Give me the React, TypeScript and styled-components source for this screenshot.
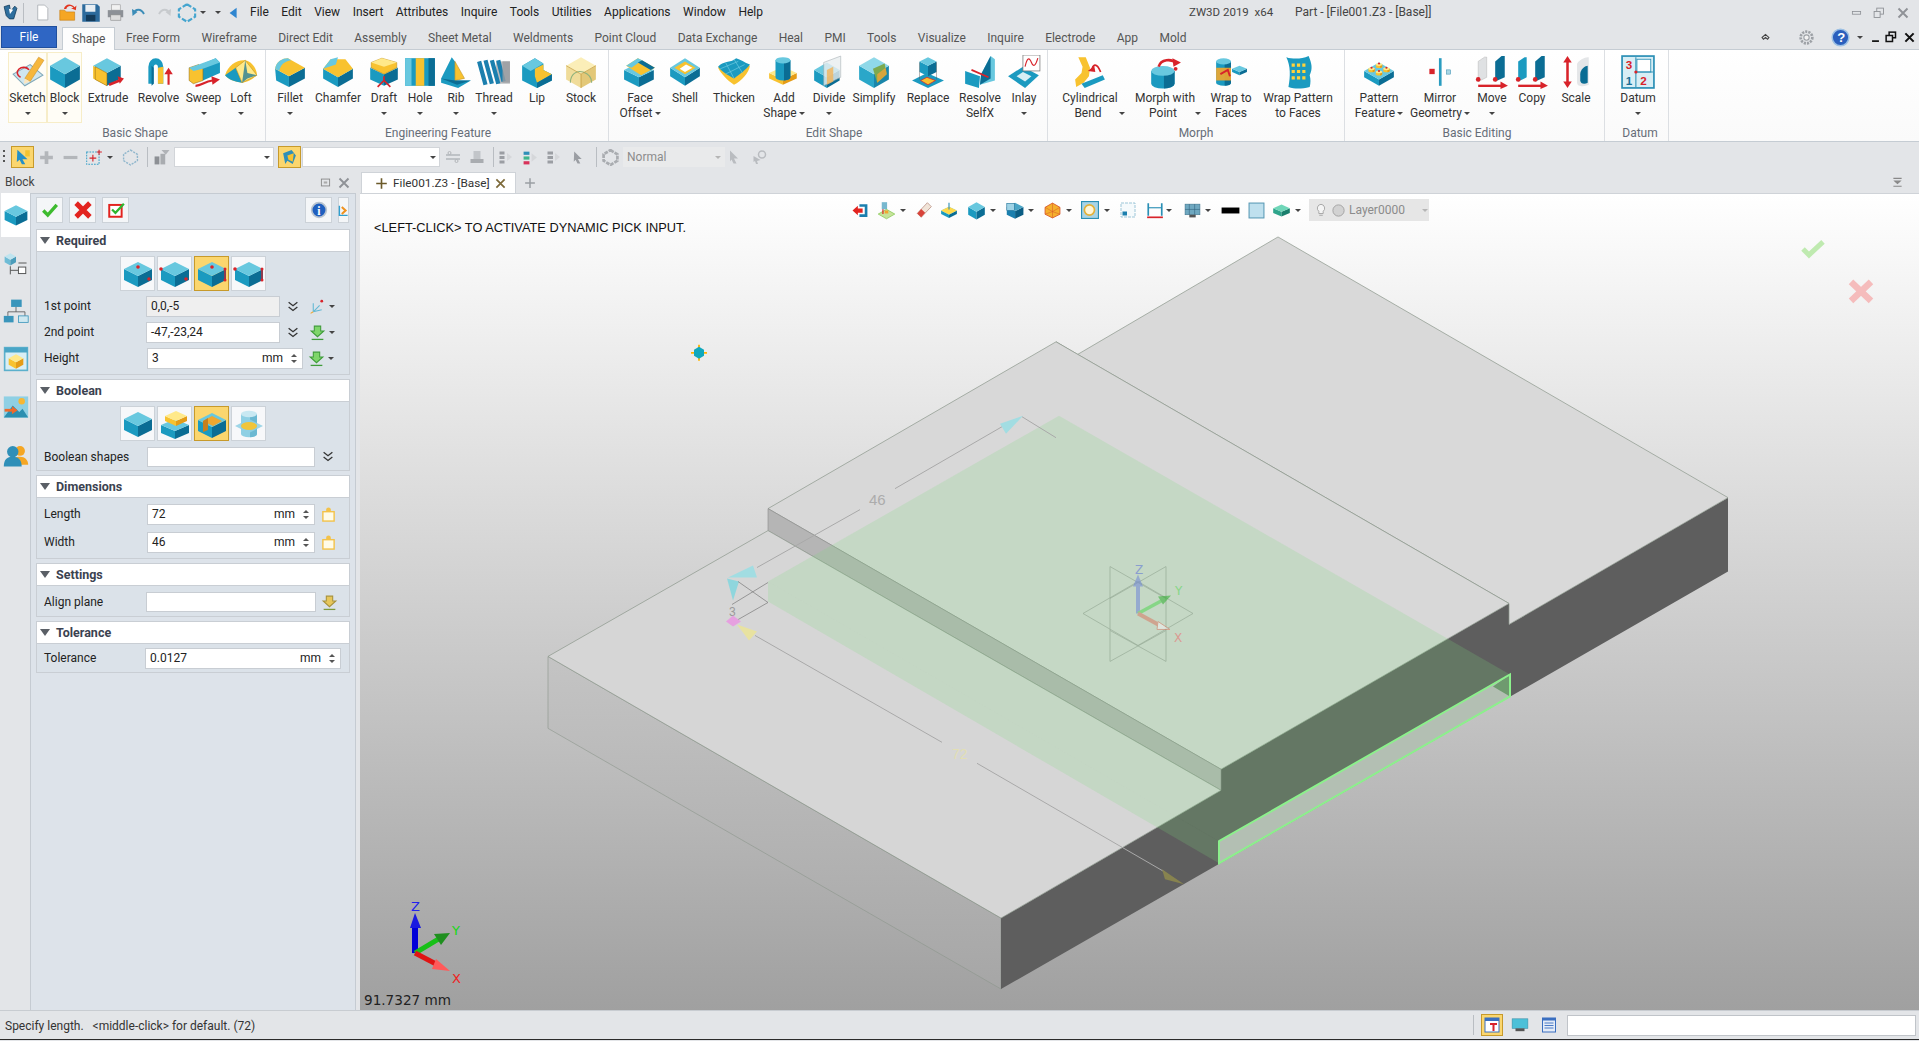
import React from "react";
import styled, { createGlobalStyle } from "styled-components";

const GlobalStyle = createGlobalStyle`
  html, body { margin: 0; padding: 0; overflow: hidden; background: #e3e5e8; }
  * { box-sizing: border-box; }
`;

const UI = `Roboto, "Liberation Sans", sans-serif`;

const Root = styled.div`
  width: 1919px;
  height: 1041px;
  display: flex;
  flex-direction: column;
  background: #e3e5e8;
  color: #333;
  font: 12px/15px ${UI};
  overflow: hidden;
`;

const TopRow = styled.div`
  height: 25px;
  flex: none;
  display: flex;
  align-items: center;
`;

const Slot = styled.div<{ $w: number; $ml?: number }>`
  width: ${(p) => p.$w}px;
  margin-left: ${(p) => p.$ml || 0}px;
  flex: none;
  display: flex;
  align-items: center;
  justify-content: center;
`;

const VSep = styled.div<{ $ml?: number }>`
  width: 1px;
  height: 20px;
  margin-left: ${(p) => p.$ml || 0}px;
  flex: none;
  background: #b9bdc2;
`;

const Menu = styled.nav`
  width: 939px;
  margin-left: 9px;
  flex: none;
  display: flex;
  gap: 12.5px;
  color: #222;
`;

const TitleA = styled.div`
  width: 106px;
  flex: none;
  color: #444;
  font-size: 11.5px;
`;

const TitleB = styled.div`
  width: 550px;
  flex: none;
  color: #444;
`;

const TabRow = styled.div`
  height: 24px;
  flex: none;
  display: flex;
  align-items: flex-end;
  position: relative;
  z-index: 1;
`;

const FileTab = styled.div`
  width: 56px;
  height: 22px;
  margin-left: 1px;
  margin-bottom: 1px;
  background: #2f66c4;
  border: 1px solid #1f4f9e;
  color: #fff;
  display: flex;
  align-items: center;
  justify-content: center;
`;

const Tab = styled.div<{ $on?: boolean }>`
  height: ${(p) => (p.$on ? 23 : 22)}px;
  padding: 0 10.7px;
  display: flex;
  align-items: center;
  color: #555;
  ${(p) =>
    p.$on &&
    `
    margin: 0 0 -1px 5px;
    padding: 0 9px;
    background: #fdfdfd;
    border: 1px solid #c5ccd3;
    border-bottom: none;
  `}
`;

const TabIcons = styled.div`
  position: absolute;
  right: 0;
  top: 0;
  height: 24px;
  display: flex;
  align-items: center;
`;

const Ribbon = styled.div`
  height: 93px;
  flex: none;
  display: flex;
  background: linear-gradient(#ffffff, #fafafa);
  border-top: 1px solid #c5ccd3;
  border-bottom: 1px solid #c5ccd3;
`;

const Group = styled.div<{ $pl: number; $pr: number }>`
  flex: none;
  padding: 2px ${(p) => p.$pr}px 0 ${(p) => p.$pl}px;
  border-right: 1px solid #dcdfe3;
  display: flex;
  flex-direction: column;
`;

const GroupItems = styled.div`
  display: flex;
  height: 71px;
`;

const GroupName = styled.div`
  margin-top: 2px;
  padding-left: 4px;
  height: 16px;
  line-height: 16px;
  text-align: center;
  color: #666d78;
`;

const RItem = styled.div<{ $w: number; $hl?: boolean }>`
  width: ${(p) => p.$w}px;
  flex: none;
  padding-top: 2px;
  display: flex;
  flex-direction: column;
  align-items: center;
  border: 1px solid ${(p) => (p.$hl ? "#f7edc8" : "transparent")};
  background: ${(p) => (p.$hl ? "#fffdf6" : "transparent")};
`;

const RIconWrap = styled.div`
  margin-bottom: 2px;
`;

const RLabel = styled.div<{ $pl?: number }>`
  height: 15px;
  padding-left: ${(p) => p.$pl || 0}px;
  display: flex;
  align-items: center;
  justify-content: center;
  white-space: nowrap;
  color: #333;
`;

const Caret = styled.span<{ $ml?: number; $light?: boolean }>`
  display: inline-block;
  flex: none;
  width: 0;
  height: 0;
  margin-left: ${(p) => p.$ml || 0}px;
  border-left: 3px solid transparent;
  border-right: 3px solid transparent;
  border-top: 3px solid ${(p) => (p.$light ? "#b5b5b5" : "#444")};
`;

const Toolbar = styled.div`
  height: 30px;
  flex: none;
  display: flex;
  align-items: center;
`;

const Grip = styled.div`
  width: 2px;
  height: 14px;
  margin-left: 3px;
  flex: none;
  background: repeating-linear-gradient(#555 0 2px, transparent 2px 5px);
`;

const Hi = styled.div<{ $w: number; $ml?: number }>`
  width: ${(p) => p.$w}px;
  height: 22px;
  margin-left: ${(p) => p.$ml || 0}px;
  flex: none;
  display: flex;
  align-items: center;
  justify-content: center;
  background: #fbd66e;
  border: 1px solid #c79a2b;
`;

const Combo = styled.div<{ $w: number; $ml?: number; $off?: boolean }>`
  width: ${(p) => p.$w}px;
  height: 20px;
  margin-left: ${(p) => p.$ml || 0}px;
  flex: none;
  padding: 0 3px 0 3px;
  display: flex;
  align-items: center;
  justify-content: space-between;
  background: ${(p) => (p.$off ? "#e9eaeb" : "#fff")};
  color: #8c8c8c;
  border: 1px solid ${(p) => (p.$off ? "#e9eaeb" : "#d2d5d9")};
`;

const Work = styled.div`
  height: 838px;
  flex: none;
  display: flex;
`;

const Dock = styled.aside`
  width: 360px;
  flex: none;
  display: flex;
  flex-direction: column;
`;

const DockTitle = styled.div`
  height: 21px;
  flex: none;
  padding: 0 8px 0 5px;
  display: flex;
  align-items: center;
  justify-content: space-between;
  color: #444;
`;

const DockBody = styled.div`
  flex: 1;
  display: flex;
`;

const Rail = styled.div`
  width: 30px;
  flex: none;
  display: flex;
  flex-direction: column;
  gap: 4px;
  padding-left: 1px;
`;

const RailTab = styled.div<{ $on?: boolean }>`
  height: 44px;
  display: flex;
  align-items: center;
  justify-content: center;
  background: ${(p) => (p.$on ? "#fff" : "transparent")};
`;

const Panel = styled.div`
  width: 326px;
  flex: none;
  padding: 3px 6px 0 5px;
  background: #dde3ea;
  border: 1px solid #c5cbd2;
  border-bottom: none;
  display: flex;
  flex-direction: column;
`;

const PanelTop = styled.div`
  height: 26px;
  flex: none;
  display: flex;
  gap: 6px;
  margin-bottom: 6px;
`;

const PanelBtn = styled.div<{ $ml?: number; $w?: number }>`
  width: ${(p) => p.$w || 28}px;
  margin-left: ${(p) => p.$ml || 0}px;
  display: flex;
  align-items: center;
  justify-content: center;
  background: #f4f6f8;
  border: 1px solid #ccd2d8;
`;

const Section = styled.section`
  margin: 0 0 4px 0;
  width: 314px;
  flex: none;
  border: 1px solid #c9ced4;
  border-top: none;
`;

const SectionHead = styled.div`
  height: 23px;
  padding-left: 3px;
  display: flex;
  align-items: center;
  gap: 6px;
  background: #fff;
  border-top: 1px solid #c9ced4;
  border-bottom: 1px solid #c9ced4;
  font-weight: 700;
  font-size: 12.5px;
  color: #3b4250;
`;

const HeadArrow = styled.span`
  width: 0;
  height: 0;
  border-left: 5px solid transparent;
  border-right: 5px solid transparent;
  border-top: 7px solid #5a5f66;
`;

const SectionBody = styled.div<{ $pt: number; $pb: number; $gap: number }>`
  padding: ${(p) => p.$pt}px 0 ${(p) => p.$pb}px 7px;
  display: flex;
  flex-direction: column;
  gap: ${(p) => p.$gap}px;
  background: #dbe2e9;
`;

const ShapeRow = styled.div`
  margin-left: 76px;
  display: flex;
  gap: 2px;
`;

const ShapeBtn = styled.div<{ $on?: boolean }>`
  width: 35px;
  height: 35px;
  display: flex;
  align-items: center;
  justify-content: center;
  background: ${(p) => (p.$on ? "#fbd66e" : "#f7f8fa")};
  border: 1px solid ${(p) => (p.$on ? "#c79a2b" : "#ccd2d8")};
`;

const Row = styled.div<{ $h?: number }>`
  height: ${(p) => p.$h || 21}px;
  display: flex;
  align-items: center;
`;

const RowLabel = styled.div`
  width: 102px;
  flex: none;
  color: #222;
`;

const Field = styled.div<{ $w: number; $off?: boolean; $ml?: number }>`
  width: ${(p) => p.$w}px;
  height: 100%;
  flex: none;
  margin-left: ${(p) => p.$ml || 0}px;
  padding: 0 4px;
  display: flex;
  align-items: center;
  background: ${(p) => (p.$off ? "#efefef" : "#fff")};
  border: 1px solid #c8cdd3;
  color: #222;
`;

const Unit = styled.span`
  margin-left: auto;
  margin-right: 8px;
`;

const Spin = styled.span`
  display: flex;
  flex-direction: column;
  gap: 3px;
  margin-right: 1px;
`;

const SpinTip = styled.span<{ $down?: boolean }>`
  width: 0;
  height: 0;
  border-left: 3px solid transparent;
  border-right: 3px solid transparent;
  ${(p) => (p.$down ? "border-top: 3px solid #555;" : "border-bottom: 3px solid #555;")}
`;

const Main = styled.main`
  flex: 1;
  min-width: 0;
  display: flex;
  flex-direction: column;
`;

const DocRow = styled.div`
  height: 21px;
  flex: none;
  display: flex;
  align-items: stretch;
  padding-left: 1px;
`;

const DocTab = styled.div`
  width: 155px;
  flex: none;
  padding-left: 13px;
  display: flex;
  align-items: center;
  gap: 5px;
  background: #fff;
  border: 1px solid #cfd3d8;
  border-bottom: none;
  color: #333;
  font-size: 11.8px;
`;

const Viewport = styled.div`
  flex: 1;
  position: relative;
  overflow: hidden;
  background: linear-gradient(#ffffff, #a0a0a0);
  border-top: 1px solid #cfd3d8;
`;

const Canvas = styled.svg`
  position: absolute;
  inset: 0;
  width: 100%;
  height: 100%;
`;

const Hint = styled.div`
  position: absolute;
  left: 14px;
  top: 26px;
  font: 12.8px/15px "Liberation Sans", Arial, sans-serif;
  color: #111;
`;

const Readout = styled.div`
  position: absolute;
  left: 4px;
  bottom: 1px;
  font: 13.6px/18px "DejaVu Sans", sans-serif;
  color: #222;
`;

const ViewBar = styled.div`
  position: absolute;
  left: 492px;
  top: 5px;
  height: 22px;
  display: flex;
  align-items: center;
`;

const LayerBox = styled.div`
  width: 120px;
  height: 22px;
  margin-left: 7px;
  flex: none;
  padding: 0 7px 0 5px;
  display: flex;
  align-items: center;
  gap: 3px;
  background: #e6e6e6;
  color: #8b8b8b;
`;

const Status = styled.footer`
  height: 30px;
  flex: none;
  display: flex;
  align-items: center;
  padding-left: 5px;
  border-top: 1px solid #c8ccd1;
  border-bottom: 1px solid #2a2a2a;
  color: #333;
`;

const StatusText = styled.div`
  width: 1468px;
  flex: none;
  padding-top: 3px;
  white-space: pre;
`;

const StatusHi = styled(Hi)`
  height: 22px;
`;

const StatusInput = styled.div`
  width: 349px;
  height: 21px;
  margin-left: 10px;
  flex: none;
  background: #fff;
  border: 1px solid #c0c4c9;
`;

const IconSvg = styled.svg`
  display: block;
  flex: none;
`;

type Tone = { t: string; l: string; r: string };
const teal: Tone = { t: "#68c8df", l: "#1b9ac0", r: "#0b6d94" };
const yel: Tone = { t: "#ffe98a", l: "#f8c22f", r: "#e59c16" };
const pale: Tone = { t: "#fbeeb8", l: "#f0dc9a", r: "#e3c878" };

function Ico({ s = 32, children }: { s?: number; children: React.ReactNode }) {
  return (
    <IconSvg width={s} height={s} viewBox="0 0 32 32">
      {children}
    </IconSvg>
  );
}

function Box({ x, y, w, h, d, c = teal }: { x: number; y: number; w: number; h: number; d: number; c?: Tone }) {
  return (
    <g>
      <polygon points={`${x - w},${y} ${x},${y + h} ${x},${y + h + d} ${x - w},${y + d}`} fill={c.l} />
      <polygon points={`${x + w},${y} ${x},${y + h} ${x},${y + h + d} ${x + w},${y + d}`} fill={c.r} />
      <polygon points={`${x - w},${y} ${x},${y - h} ${x + w},${y} ${x},${y + h}`} fill={c.t} />
    </g>
  );
}

function Cyl({ x, y, r, h, c = teal }: { x: number; y: number; r: number; h: number; c?: Tone }) {
  return (
    <g>
      <path d={`M${x - r} ${y} v${h} a${r} ${r / 2.4} 0 0 0 ${2 * r} 0 v${-h}z`} fill={c.l} />
      <path d={`M${x + 1} ${y} v${h + r / 2.4} a${r} ${r / 2.4} 0 0 0 ${r - 1} ${-r / 2.4} v${-h}z`} fill={c.r} />
      <ellipse cx={x} cy={y} rx={r} ry={r / 2.4} fill={c.t} />
    </g>
  );
}

function Arrow({ d, w = 2 }: { d: string; w?: number }) {
  return <path d={d} fill="none" stroke="#d8232a" strokeWidth={w} />;
}

function Dot({ x, y, r = 1.8 }: { x: number; y: number; r?: number }) {
  return <circle cx={x} cy={y} r={r} fill="#d8232a" />;
}

const ribbonIcons: Record<string, React.ReactNode> = {
  sketch: (
    <>
      <polygon points="2,18 18,9 30,19 13,29" fill="#cfe6ef" stroke="#7fa8b8" />
      <path d="M9 21a6 5 0 1 1 8-7" fill="none" stroke="#d8232a" strokeWidth="1.5" />
      <polygon points="13,22 26,2 31,5 18,25" fill="#f6b73c" stroke="#c98a1e" strokeWidth=".5" />
      <polygon points="13,22 18,25 12,27" fill="#fbe6c0" />
    </>
  ),
  block: <Box x={16} y={10} w={14} h={8} d={13} />,
  extrude: (
    <>
      <Box x={15} y={10} w={13} h={7} d={12} c={{ t: teal.t, l: yel.l, r: teal.r }} />
      <polygon points="4,11 15,17 15,29 4,23" fill={yel.l} stroke="#8f6a12" strokeWidth=".5" />
      <Arrow d="M17 28l10-4" w={2.4} />
      <polygon points="25,20 31,22 27,27" fill="#d8232a" />
    </>
  ),
  revolve: (
    <>
      <path d="M6 27V11a7 8 0 0 1 14 0v16h-5V12a2 3 0 0 0-4 0v15z" fill={teal.l} />
      <path d="M15 12l5-1v16h-5z" fill={yel.l} />
      <path d="M11 27V12l-2-2v19z" fill={teal.r} />
      <Arrow d="M25 28V16" w={2} />
      <polygon points="21,18 25,12 29,18" fill="#d8232a" />
    </>
  ),
  sweep: (
    <>
      <polygon points="11,10 27,3 31,7 31,17 15,24" fill={teal.l} />
      <polygon points="2,12 11,9 15,13 15,24 6,27 2,24" fill={yel.l} stroke="#8f6a12" strokeWidth=".5" />
      <polygon points="2,12 11,9 27,3 31,7 15,13 6,15" fill={teal.t} />
      <Arrow d="M8 29c6 0 8-4 16-5" w={2} />
      <polygon points="23,20 31,23 24,28" fill="#d8232a" />
    </>
  ),
  loft: (
    <>
      <path d="M1 19C4 9 13 4 20 5c6 1 11 8 11 14-4 4-10 7-14 7C10 25 4 23 1 19z" fill={yel.l} />
      <path d="M1 19l10-7 6 14C10 25 4 23 1 19z" fill={teal.l} />
      <path d="M11 12l9-7 11 14-14 7z" fill={yel.t} stroke="#b88a1a" strokeWidth=".5" />
      <path d="M20 5l2 12 9 2-9 3-5 4" fill={teal.r} opacity=".7" />
    </>
  ),
  fillet: (
    <>
      <path d="M2 13l13 7v10L3 24z" fill={teal.l} />
      <path d="M15 20l15-8v10L15 30z" fill={teal.r} />
      <path d="M2 13C3 6 9 3 14 3l16 9-15 8z" fill={yel.l} />
      <path d="M2 13C3 6 9 3 14 3l3 2C11 6 7 9 6 15z" fill={teal.t} />
    </>
  ),
  chamfer: (
    <>
      <Box x={16} y={13} w={14} h={8} d={9} />
      <polygon points="2,13 9,4 23,4 30,13 16,21" fill={yel.l} />
      <polygon points="2,13 9,4 16,2 14,9" fill={teal.t} />
    </>
  ),
  draft: (
    <>
      <Box x={16} y={12} w={13} h={6} d={11} />
      <polygon points="4,7 14,3 28,7 28,12 16,18 4,12" fill={yel.l} stroke="#b88a1a" strokeWidth=".5" />
      <polygon points="4,7 14,3 28,7 16,11" fill={yel.t} />
      <Arrow d="M16 24v-4M16 24l-6 6M16 24l6 6" w={1.6} />
    </>
  ),
  hole: (
    <>
      <rect x="2" y="3" width="28" height="26" fill={teal.l} />
      <rect x="2" y="3" width="6" height="26" fill={teal.t} />
      <rect x="24" y="3" width="6" height="26" fill={teal.r} />
      <rect x="12" y="3" width="8" height="26" fill={yel.l} />
    </>
  ),
  rib: (
    <>
      <polygon points="2,22 12,2 15,6 15,24 30,24 18,31 2,26" fill={teal.l} />
      <polygon points="15,6 24,22 15,24" fill={yel.l} stroke="#b88a1a" strokeWidth=".5" />
      <polygon points="2,22 15,24 30,24 17,28" fill={teal.r} />
    </>
  ),
  thread: (
    <>
      <rect x="18" y="6" width="13" height="21" fill="#b8babd" />
      <path d="M2 6l6 22M8 5l6 22M14 5l6 22M20 5l5 20" stroke="#1b7fae" strokeWidth="4" fill="none" />
      <rect x="24" y="6" width="7" height="20" fill="#9a9ca0" opacity=".8" />
    </>
  ),
  lip: (
    <>
      <polygon points="2,10 14,3 22,8 22,14 30,18 30,24 16,31 2,24" fill={teal.l} />
      <polygon points="14,13 22,9 22,14 30,18 16,26 14,20" fill={yel.l} />
      <polygon points="2,10 14,3 22,8 10,15" fill={teal.t} />
      <polygon points="16,26 30,18 30,24 16,31" fill={teal.r} />
    </>
  ),
  stock: (
    <>
      <Box x={16} y={10} w={14} h={8} d={13} c={pale} />
      <path d="M6 26C6 18 12 14 18 16s8 6 8 10" fill="none" stroke="#8fb27d" strokeWidth="1" />
      <path d="M2 10l14 8 14-8M16 18v13" fill="none" stroke="#c39a3a" strokeWidth=".7" />
    </>
  ),
  face: (
    <>
      <Box x={15} y={14} w={14} h={7} d={9} />
      <polygon points="3,10 14,3 30,12 17,19" fill={yel.l} />
      <polygon points="3,10 14,3 18,5 8,12" fill={teal.t} />
      <polygon points="18,5 30,12 26,14 14,7" fill={teal.r} />
    </>
  ),
  shell: (
    <>
      <Box x={16} y={12} w={14} h={9} d={8} />
      <polygon points="6,12 16,6 26,12 16,18" fill={yel.l} />
      <polygon points="11,13 17,9 23,12 16,16" fill="#fff" />
    </>
  ),
  thicken: (
    <>
      <path d="M1 12C6 6 12 9 18 4c4 1 8 4 13 6-1 7-8 14-15 18C10 24 4 18 1 12z" fill={yel.l} />
      <path d="M1 11C6 5 12 8 18 3c4 1 8 4 13 6-4 5-8 8-15 13C10 19 4 15 1 11z" fill={teal.l} />
      <path d="M8 7l8 15M16 4l8 13M3 13l17-7M8 18l18-9" stroke={teal.t} strokeWidth=".7" fill="none" />
    </>
  ),
  addShape: (
    <>
      <Box x={15} y={17} w={13} h={6} d={5} c={yel} />
      <Cyl x={15} y={5} r={7} h={16} />
    </>
  ),
  divide: (
    <>
      <Box x={14} y={14} w={12} h={7} d={10} />
      <polygon points="11,7 27,1 27,21 11,29" fill="#e9eef0" stroke="#9aa5aa" strokeWidth=".6" opacity=".8" />
      <polygon points="14,14 20,11 20,25 14,28" fill="#f3b45a" opacity=".8" />
    </>
  ),
  simplify: (
    <>
      <Box x={16} y={10} w={14} h={8} d={13} c={{ t: "#8fd8e8", l: "#2aa7c9", r: "#1a86aa" }} />
      <polygon points="15,13 26,8 28,18 19,26" fill="#7ca94e" />
      <polygon points="19,18 27,12 28,18 19,26" fill="#d8a53c" />
    </>
  ),
  replace: (
    <>
      <polygon points="1,24 15,17 31,24 16,31" fill={teal.l} />
      <polygon points="9,24 15,21 23,24 16,28" fill={yel.l} stroke="#d8232a" strokeWidth=".7" />
      <Box x={16} y={6} w={8} h={4} d={10} />
      <path d="M8 7v16M24 7v16" stroke="#555" strokeWidth=".4" />
    </>
  ),
  resolve: (
    <>
      <polygon points="2,15 16,20 15,31 2,27" fill={teal.l} />
      <polygon points="17,18 26,1 30,4 30,24 16,28" fill={teal.t} />
      <polygon points="17,18 26,1 26,22 16,28" fill={teal.r} />
      <Arrow d="M8 14l16 7" w={1.6} />
    </>
  ),
  inlay: (
    <>
      <polygon points="1,20 15,11 30,19 17,31" fill={teal.l} />
      <polygon points="9,20 15,16 23,20 17,25" fill="#d7eef4" />
      <rect x="15" y="0" width="16" height="15" fill="#fff" stroke="#777" strokeWidth=".7" />
      <path d="M17 11c2-9 4-9 6-4s4 3 6-4" fill="none" stroke="#d8232a" strokeWidth="1.1" />
    </>
  ),
  bend: (
    <>
      <polygon points="5,2 12,2 16,12 15,20 10,26 3,30 2,23 8,17 9,11" fill={yel.l} />
      <polygon points="8,27 28,19 30,23 11,31" fill={teal.l} />
      <Arrow d="M18 15c0-6 4-9 8 1" w={1.6} />
      <polygon points="14,15 20,10 21,16" fill="#d8232a" />
    </>
  ),
  morph: (
    <>
      <Cyl x={14} y={15} r={11} h={12} />
      <Arrow d="M10 11c2-7 12-8 17-3" w={2.4} />
      <polygon points="23,3 31,7 24,11" fill="#d8232a" />
      <Dot x={26} y={13} />
    </>
  ),
  wrapF: (
    <>
      <Cyl x={9} y={6} r={7} h={20} />
      <polygon points="2,12 16,12 16,24 2,24" fill="#f3a72b" opacity=".9" />
      <path d="M6 18l7-4 2 6" fill="none" stroke="#d8232a" strokeWidth="1.8" />
      <Box x={24} y={13} w={7} h={3} d={3} />
    </>
  ),
  wrapP: (
    <>
      <path d="M5 2c6 2 14 2 21-1 3 7 4 12 1 18 1 4 1 7 0 11-8 2-14 2-20 0 2-10 2-20-2-28z" fill={teal.l} />
      <path d="M10 8h3v3h-3zM15 8h3v3h-3zM20 8h3v3h-3zM10 14h3v3h-3zM15 14h3v3h-3zM20 14h3v3h-3zM10 20h3v3h-3zM15 20h3v3h-3zM20 20h3v3h-3z" fill="#ffd23a" />
    </>
  ),
  pattern: (
    <>
      <Box x={16} y={15} w={14} h={8} d={6} />
      <Cyl x={9} y={13} r={3} h={2} c={yel} />
      <Cyl x={16} y={9} r={3} h={2} c={yel} />
      <Cyl x={23} y={13} r={3} h={2} c={yel} />
      <Cyl x={16} y={16} r={3} h={2} c={yel} />
      <Dot x={16} y={8} r={1} />
      <Dot x={9} y={12} r={1} />
      <Dot x={23} y={12} r={1} />
      <Dot x={16} y={15} r={1} />
    </>
  ),
  mirror: (
    <>
      <rect x="15" y="3" width="2.5" height="26" fill="#2a9cc0" />
      <rect x="6" y="13" width="5" height="5" fill="#d8232a" />
      <rect x="22" y="14" width="4" height="4" fill="#a9d6e5" stroke="#3a8fb0" strokeWidth=".5" />
    </>
  ),
  move: (
    <>
      <polygon points="3,6 9,2 11,2 11,21 3,25" fill="#dfe1e3" stroke="#aaa" strokeWidth=".4" />
      <polygon points="19,6 25,1 28,1 28,21 19,25" fill={teal.r} />
      <Dot x={3} y={23} r={2.2} />
      <Dot x={19} y={23} r={2.2} />
      <Arrow d="M3 29h22" w={2.2} />
      <polygon points="24,25 31,29 24,32" fill="#d8232a" />
    </>
  ),
  copy: (
    <>
      <polygon points="3,6 9,2 11,2 11,21 3,25" fill={teal.l} />
      <polygon points="19,6 25,1 28,1 28,21 19,25" fill={teal.r} />
      <Dot x={3} y={23} r={2.2} />
      <Dot x={19} y={23} r={2.2} />
      <Arrow d="M3 29h22" w={2.2} />
      <polygon points="24,25 31,29 24,32" fill="#d8232a" />
    </>
  ),
  scale: (
    <>
      <path d="M17 8c3-5 9-6 11-6v26c-4 2-11 2-11-2z" fill="#e4e6e8" />
      <path d="M20 18c0-5 5-8 7-8v16c-3 2-7 1-7-2z" fill={teal.r} />
      <Arrow d="M8 4v24" w={2.4} />
      <polygon points="4,7 8,1 12,7" fill="#d8232a" />
      <polygon points="4,25 8,31 12,25" fill="#d8232a" />
    </>
  ),
  datum: (
    <>
      <rect x="1" y="1" width="30" height="30" fill="#d8eef5" stroke="#2a8fb5" strokeWidth="1.6" />
      <rect x="15" y="4" width="13" height="12" fill="#fff" stroke="#2a8fb5" strokeWidth=".8" />
      <path d="M14 2v28M14 16h16" stroke="#2a8fb5" strokeWidth="1" />
      <Dot x={14} y={16} r={1.5} />
      <text x="4.5" y="13" fontFamily="Liberation Sans" fontSize="11" fontWeight="700" fill="#d8232a">3</text>
      <text x="4.5" y="28" fontFamily="Liberation Sans" fontSize="11" fontWeight="700" fill="#1b6f95">1</text>
      <text x="18" y="28" fontFamily="Liberation Sans" fontSize="11" fontWeight="700" fill="#d8232a">2</text>
    </>
  ),
};

type RibbonItem = { id: string; l1: string; l2?: string; w: number; caret?: boolean; caretMl?: number; pl?: number; hl?: boolean };
type RibbonGroup = { name: string; pl: number; pr: number; items: RibbonItem[] };

const groups: RibbonGroup[] = [
  {
    name: "Basic Shape",
    pl: 8,
    pr: 7,
    items: [
      { id: "sketch", l1: "Sketch", w: 39, caret: true, hl: true },
      { id: "block", l1: "Block", w: 35, caret: true, hl: true },
      { id: "extrude", l1: "Extrude", w: 52 },
      { id: "revolve", l1: "Revolve", w: 49 },
      { id: "sweep", l1: "Sweep", w: 41, caret: true },
      { id: "loft", l1: "Loft", w: 34, caret: true },
    ],
  },
  {
    name: "Engineering Feature",
    pl: 4,
    pr: 6,
    items: [
      { id: "fillet", l1: "Fillet", w: 40, caret: true },
      { id: "chamfer", l1: "Chamfer", w: 56 },
      { id: "draft", l1: "Draft", w: 36, caret: true },
      { id: "hole", l1: "Hole", w: 36, caret: true },
      { id: "rib", l1: "Rib", w: 36, caret: true },
      { id: "thread", l1: "Thread", w: 40, caret: true },
      { id: "lip", l1: "Lip", w: 46 },
      { id: "stock", l1: "Stock", w: 42 },
    ],
  },
  {
    name: "Edit Shape",
    pl: 9,
    pr: 1,
    items: [
      { id: "face", l1: "Face", l2: "Offset", w: 44, caret: true, caretMl: 2 },
      { id: "shell", l1: "Shell", w: 46 },
      { id: "thicken", l1: "Thicken", w: 52 },
      { id: "addShape", l1: "Add", l2: "Shape", w: 48, caret: true, caretMl: 2 },
      { id: "divide", l1: "Divide", w: 42, caret: true },
      { id: "simplify", l1: "Simplify", w: 48 },
      { id: "replace", l1: "Replace", w: 60 },
      { id: "resolve", l1: "Resolve", l2: "SelfX", w: 44 },
      { id: "inlay", l1: "Inlay", w: 44, caret: true },
    ],
  },
  {
    name: "Morph",
    pl: 4,
    pr: 8,
    items: [
      { id: "bend", l1: "Cylindrical", l2: "Bend", w: 76, caret: true, caretMl: 17, pl: 19 },
      { id: "morph", l1: "Morph with", l2: "Point", w: 74, caret: true, caretMl: 18, pl: 20 },
      { id: "wrapF", l1: "Wrap to", l2: "Faces", w: 58 },
      { id: "wrapP", l1: "Wrap Pattern", l2: "to Faces", w: 76 },
    ],
  },
  {
    name: "Basic Editing",
    pl: 5,
    pr: 4,
    items: [
      { id: "pattern", l1: "Pattern", l2: "Feature", w: 58, caret: true, caretMl: 2 },
      { id: "mirror", l1: "Mirror", l2: "Geometry", w: 64, caret: true, caretMl: 2 },
      { id: "move", l1: "Move", w: 40, caret: true },
      { id: "copy", l1: "Copy", w: 40 },
      { id: "scale", l1: "Scale", w: 48 },
    ],
  },
  {
    name: "Datum",
    pl: 5,
    pr: 2,
    items: [{ id: "datum", l1: "Datum", w: 56, caret: true }],
  },
];

const menuItems = ["File", "Edit", "View", "Insert", "Attributes", "Inquire", "Tools", "Utilities", "Applications", "Window", "Help"];
const tabs = ["Free Form", "Wireframe", "Direct Edit", "Assembly", "Sheet Metal", "Weldments", "Point Cloud", "Data Exchange", "Heal", "PMI", "Tools", "Visualize", "Inquire", "Electrode", "App", "Mold"];

function ShapeIcon({ tl, tr, br, bl, side }: { tl?: boolean; tr?: boolean; br?: boolean; bl?: boolean; side?: boolean }) {
  return (
    <Ico s={32}>
      <Box x={16} y={11} w={14} h={7} d={11} />
      {tl && <Dot x={16} y={9} />}
      {tr && <Dot x={30} y={20} />}
      {bl && <Dot x={2} y={11} />}
      {br && <Dot x={27} y={21} />}
      {side && (
        <>
          <Dot x={29} y={11} r={1.5} />
          <Dot x={29} y={22} r={1.5} />
          <path d="M29 11v11" stroke="#d8232a" strokeWidth="1.3" />
        </>
      )}
    </Ico>
  );
}

function DoubleChevron() {
  return (
    <Ico s={14}>
      <path d="M6 5l10 8 10-8M6 16l10 8 10-8" fill="none" stroke="#333" strokeWidth="3" />
    </Ico>
  );
}

function PickDown({ olive }: { olive?: boolean }) {
  return (
    <Ico s={17}>
      <path d="M10 4h12v9h6L16 24 4 13h6z" fill={olive ? "#e7c65a" : "#7ed66a"} stroke={olive ? "#a8923c" : "#3f9c3a"} strokeWidth="2" />
      <path d="M5 29h22" stroke={olive ? "#7f9a3a" : "#3f9c3a"} strokeWidth="2.4" />
    </Ico>
  );
}

function Lock() {
  return (
    <Ico s={15}>
      <rect x="4" y="10" width="24" height="20" fill="#fffbe8" stroke="#f3c24a" strokeWidth="3" />
      <path d="M11 10V6a5 5 0 0 1 10 0v4" fill="#f3c24a" />
    </Ico>
  );
}

function Spinner() {
  return (
    <Spin>
      <SpinTip />
      <SpinTip $down />
    </Spin>
  );
}

function Triad() {
  return (
    <g>
      <path d="M415 953V926" stroke="#0000d8" strokeWidth="6" />
      <polygon points="410,928 415,913 421,928" fill="#1a1ae0" />
      <path d="M415 953L440 938" stroke="#18c018" strokeWidth="5" />
      <polygon points="434,934 450,933 441,945" fill="#1f8f1f" />
      <path d="M415 953L438 965" stroke="#e01414" strokeWidth="5" />
      <polygon points="436,959 450,971 432,969" fill="#ff5a5a" />
      <text x="411" y="911" fontFamily="DejaVu Sans" fontSize="13" fill="#2222ee">Z</text>
      <text x="452" y="935" fontFamily="DejaVu Sans" fontSize="13" fill="#16d816">Y</text>
      <text x="452" y="983" fontFamily="DejaVu Sans" fontSize="13" fill="#ee2222">X</text>
    </g>
  );
}

function Model() {
  const edge = "#8b968b";
  const dim = "#a9a9a9";
  return (
    <>
      <defs>
        <linearGradient id="frontFace" x1="0" y1="656" x2="0" y2="989" gradientUnits="userSpaceOnUse">
          <stop offset="0" stopColor="#c4c4c4" />
          <stop offset="1" stopColor="#a6a6a6" />
        </linearGradient>
      </defs>
      <polygon points="548,656 1001,918 1001,989 548,728" fill="url(#frontFace)" stroke={edge} strokeWidth=".6" />
      <polygon points="1001,918 1221,790 1221,769 1509,603 1509,624 1728,497 1728,571 1001,989" fill="#5e5e5e" />
      <polygon points="1077,354 1278,236 1728,497 1509,624 1509,603 1056,341" fill="#d9d9d9" stroke={edge} strokeWidth=".7" />
      <polygon points="768,508 1056,341 1509,603 1221,769" fill="#d8d8d8" stroke={edge} strokeWidth=".7" />
      <polygon points="768,508 1221,769 1221,790 768,530" fill="#b5b5b5" stroke="#8a8a8a" strokeWidth=".6" />
      <polygon points="548,656 768,530 1221,790 1001,918" fill="#d6d6d6" stroke={edge} strokeWidth=".7" />
      <polygon points="768,581 1059,415 1510,674 1219,841" fill="rgb(126,222,126)" fillOpacity=".2" />
      <polygon points="768,581 1219,841 1219,863 768,601" fill="rgb(126,222,126)" fillOpacity=".2" />
      <polygon points="1219,841 1510,674 1510,696 1219,863" fill="#b3bfb3" />
      <polygon points="1493,686 1510,674 1510,696" fill="#6f9a6f" />
      <polygon points="1219,841 1510,674 1510,696 1219,863" fill="none" stroke="#8cf08c" strokeWidth="2" />

      <path d="M757 567L860 509M895 488L1002 426M1022 416L1056 437" stroke={dim} strokeWidth="1" fill="none" />
      <text x="869" y="504" fontFamily="Liberation Sans" fontSize="15" fill="#acacac">46</text>
      <polygon points="1023,415 1000,423 1006,433" fill="#a2dde2" />
      <polygon points="728,577 753,565 757,577" fill="#a2dde2" />
      <polygon points="733,600 727,578 739,581" fill="#8fd6dd" />
      <path d="M732 604L768 582M768 602L733 622M738 581L768 602" stroke="#7a7a7a" strokeWidth=".7" fill="none" />
      <text x="729" y="616" fontFamily="Liberation Sans" fontSize="12" fill="#9a9a9a">3</text>
      <polygon points="726,621 733,615 741,621 733,626" fill="#e6a0e0" />
      <polygon points="737,624 757,631 749,640" fill="#e8e2a0" />
      <path d="M755 635L942 742M977 763L1165 872" stroke={dim} strokeWidth="1" fill="none" />
      <text x="952" y="759" fontFamily="Liberation Sans" fontSize="14" fill="#e2dfb4">72</text>
      <polygon points="1184,884 1162,869 1165,879" fill="#87834f" />

      <g stroke="#7a8f7a" strokeWidth=".7" fill="none" opacity=".6">
        <path d="M1083 613L1138 581L1193 613L1138 645Z" />
        <path d="M1110 566V661M1166 566V661M1110 566L1166 598M1166 566L1110 598M1110 661L1166 630M1166 661L1110 630" />
      </g>
      <g opacity=".55">
        <path d="M1138 613V584" stroke="#6f86d8" strokeWidth="4" />
        <polygon points="1133,586 1138,574 1143,586" fill="#6f86d8" />
        <path d="M1138 613L1162 600" stroke="#54d654" strokeWidth="3.5" />
        <polygon points="1158,596 1171,595 1163,604" fill="#2fae2f" />
        <path d="M1138 613L1160 625" stroke="#d87a64" strokeWidth="4" />
        <polygon points="1158,621 1170,629 1157,629" fill="#f3f3f3" stroke="#d87a64" />
        <text x="1135" y="573" fontFamily="DejaVu Sans" fontSize="12" fill="#5a70d8">Z</text>
        <text x="1175" y="595" fontFamily="DejaVu Sans" fontSize="12" fill="#54d654">Y</text>
        <text x="1174" y="642" fontFamily="DejaVu Sans" fontSize="12" fill="#ee6a6a">X</text>
      </g>

      <path d="M691 352h16M699 344v16" stroke="#ffb400" strokeWidth="1.8" />
      <polygon points="694,349 699,346 704,349 704,355 699,358 694,355" fill="#10a8bc" />

      <path d="M1803 248l6 6 14-13" stroke="#bfeab0" strokeWidth="5" fill="none" />
      <path d="M1851 281l20 19M1871 281l-20 19" stroke="#f5bcbc" strokeWidth="6.5" fill="none" />
      <Triad />
    </>
  );
}

export default function App() {
  return (
    <Root>
      <GlobalStyle />
      <TopRow>
        <Slot $w={20}>
          <Ico s={17}>
            <path d="M4 5l10-3 2 12 8-10 4 4-6 20H14L8 22z" fill="#2f6f9e" stroke="#123b5a" strokeWidth="1.5" />
            <path d="M13 9l8 2-6 8z" fill="#fff" />
          </Ico>
        </Slot>
        <VSep $ml={3} />
        <Slot $w={24} $ml={6}>
          <Ico s={17}>
            <path d="M7 2h13l6 6v22H7z" fill="#fff" stroke="#a7abb0" strokeWidth="1.5" />
          </Ico>
        </Slot>
        <Slot $w={24} $ml={1}>
          <Ico s={19}>
            <path d="M3 12h8l3 3h14v14H3z" fill="#f5a623" stroke="#c47c10" />
            <path d="M14 10C16 4 22 4 26 8l-4 1 8 3 1-8-3 3C22 0 12 1 10 10z" fill="#e2341f" />
          </Ico>
        </Slot>
        <Slot $w={24}>
          <Ico s={20}>
            <path d="M2 2h24l4 4v24H2z" fill="#2c6a9c" />
            <rect x="7" y="3" width="16" height="11" fill="#e8eef3" />
            <rect x="8" y="19" width="15" height="10" fill="#133b5b" />
          </Ico>
        </Slot>
        <Slot $w={24}>
          <Ico s={19}>
            <rect x="9" y="3" width="15" height="9" fill="#f1f1f1" stroke="#999" />
            <path d="M3 12h26v12H3z" fill="#8c9096" />
            <rect x="8" y="20" width="17" height="9" fill="#dcdcdc" stroke="#888" />
          </Ico>
        </Slot>
        <Slot $w={24}>
          <Ico s={16}>
            <path d="M6 17C9 7 20 7 26 18" fill="none" stroke="#3c8db8" strokeWidth="4" />
            <polygon points="2,8 13,14 3,22" fill="#3c8db8" />
          </Ico>
        </Slot>
        <Slot $w={24} $ml={1}>
          <Ico s={16}>
            <path d="M26 17C23 7 12 7 6 18" fill="none" stroke="#c7cacd" strokeWidth="4" />
            <polygon points="30,8 19,14 29,22" fill="#c7cacd" />
          </Ico>
        </Slot>
        <Slot $w={22}>
          <Ico s={20}>
            <polygon points="16,2 29,10 29,22 16,30 3,22 3,10" fill="none" stroke="#45a5cf" strokeWidth="3.4" strokeDasharray="8 3" />
          </Ico>
        </Slot>
        <Slot $w={10}>
          <Caret />
        </Slot>
        <Slot $w={12} $ml={4}>
          <Caret />
        </Slot>
        <Slot $w={14} $ml={3}>
          <Ico s={14}>
            <polygon points="22,4 22,28 6,16" fill="#2f86d0" />
          </Ico>
        </Slot>
        <Menu>
          {menuItems.map((m) => (
            <span key={m}>{m}</span>
          ))}
        </Menu>
        <TitleA>ZW3D 2019&nbsp; x64</TitleA>
        <TitleB>Part - [File001.Z3 - [Base]]</TitleB>
        <Slot $w={14} $ml={4}>
          <Ico s={11}>
            <rect x="4" y="13" width="24" height="8" fill="none" stroke="#8f9297" strokeWidth="2.4" />
          </Ico>
        </Slot>
        <Slot $w={14} $ml={9}>
          <Ico s={12}>
            <rect x="10" y="3" width="18" height="16" fill="none" stroke="#8f9297" strokeWidth="2.4" />
            <rect x="3" y="12" width="16" height="16" fill="#e3e5e8" stroke="#8f9297" strokeWidth="2.4" />
          </Ico>
        </Slot>
        <Slot $w={14} $ml={10}>
          <Ico s={12}>
            <path d="M4 4l24 24M28 4L4 28" stroke="#8f9297" strokeWidth="5" />
          </Ico>
        </Slot>
      </TopRow>
      <TabRow>
        <FileTab>File</FileTab>
        <Tab $on>Shape</Tab>
        {tabs.map((t) => (
          <Tab key={t}>{t}</Tab>
        ))}
        <TabIcons>
          <Ico s={11}>
            <path d="M6 16l10-9 10 9-4 5-6-5-6 5z" fill="none" stroke="#444" strokeWidth="3" />
          </Ico>
          <Slot $w={22} $ml={24}>
            <Ico s={17}>
              <circle cx="16" cy="16" r="11" fill="none" stroke="#9da1a6" strokeWidth="5" strokeDasharray="4 2" />
              <circle cx="16" cy="16" r="5" fill="#f2f2f2" stroke="#9da1a6" strokeWidth="2" />
            </Ico>
          </Slot>
          <Slot $w={20} $ml={13}>
            <Ico s={19}>
              <circle cx="16" cy="16" r="14" fill="#2b5fbd" stroke="#9cc0e4" strokeWidth="2.5" />
              <text x="10.5" y="24" fontFamily="Liberation Sans" fontSize="22" fontWeight="700" fill="#fff">?</text>
            </Ico>
          </Slot>
          <Caret $ml={7} />
          <Slot $w={12} $ml={6}>
            <Ico s={11}>
              <rect x="6" y="24" width="20" height="5" fill="#111" />
            </Ico>
          </Slot>
          <Slot $w={14} $ml={3}>
            <Ico s={12}>
              <rect x="11" y="3" width="17" height="15" fill="none" stroke="#111" strokeWidth="4" />
              <rect x="3" y="12" width="17" height="16" fill="#e3e5e8" stroke="#111" strokeWidth="4" />
            </Ico>
          </Slot>
          <Slot $w={14} $ml={4} style={{ marginRight: 3 }}>
            <Ico s={11}>
              <path d="M4 4l24 24M28 4L4 28" stroke="#111" strokeWidth="6" />
            </Ico>
          </Slot>
        </TabIcons>
      </TabRow>

      <Ribbon>
        {groups.map((g) => (
          <Group key={g.name} $pl={g.pl} $pr={g.pr}>
            <GroupItems>
              {g.items.map((it) => (
                <RItem key={it.id} $w={it.w} $hl={it.hl}>
                  <RIconWrap>
                    <Ico s={34}>{ribbonIcons[it.id]}</Ico>
                  </RIconWrap>
                  <RLabel>{it.l1}</RLabel>
                  <RLabel $pl={it.pl}>
                    {it.l2}
                    {it.caret && <Caret $ml={it.caretMl} />}
                  </RLabel>
                </RItem>
              ))}
            </GroupItems>
            <GroupName>{g.name}</GroupName>
          </Group>
        ))}
      </Ribbon>

      <Toolbar>
        <Grip />
        <Hi $w={23} $ml={6}>
          <Ico s={18}>
            <polygon points="6,3 24,20 15,20 20,29 14,29 10,21 5,25" fill="#2490c8" />
            <rect x="20" y="4" width="8" height="11" fill="#f4c430" />
          </Ico>
        </Hi>
        <Slot $w={20} $ml={2}>
          <Ico s={17}>
            <path d="M16 4v24M4 16h24" stroke="#b3b6ba" strokeWidth="7" />
          </Ico>
        </Slot>
        <Slot $w={20} $ml={4}>
          <Ico s={17}>
            <path d="M3 16h26" stroke="#b3b6ba" strokeWidth="6" />
          </Ico>
        </Slot>
        <Slot $w={19} $ml={4}>
          <Ico s={18}>
            <rect x="3" y="7" width="22" height="22" fill="none" stroke="#3aa0c8" strokeWidth="1.8" strokeDasharray="3 2" />
            <path d="M14 12v12M8 18h12M25 3v9M21 7h9" stroke="#d8232a" strokeWidth="2" />
          </Ico>
        </Slot>
        <Slot $w={10} $ml={2}>
          <Caret />
        </Slot>
        <Slot $w={20} $ml={5}>
          <Ico s={17}>
            <polygon points="16,2 29,10 29,22 16,30 3,22 3,10" fill="none" stroke="#8fb6cc" strokeWidth="2.6" strokeDasharray="4 2" />
          </Ico>
        </Slot>
        <VSep $ml={7} />
        <Slot $w={18} $ml={4}>
          <Ico s={17}>
            <rect x="3" y="14" width="9" height="15" fill="#8d9095" />
            <rect x="14" y="9" width="9" height="20" fill="#a9acb0" />
            <polygon points="16,2 31,2 24,11" fill="#b0b3b7" />
          </Ico>
        </Slot>
        <Combo $w={100} $ml={4}>
          <span />
          <Caret />
        </Combo>
        <Hi $w={23} $ml={4}>
          <Ico s={17}>
            <polygon points="4,8 20,2 28,12 22,28 12,22 8,28" fill="#2f8fb8" />
            <polygon points="12,12 24,8 22,24 14,20" fill="#f8c22f" />
          </Ico>
        </Hi>
        <Combo $w={138} $ml={1}>
          <span />
          <Caret />
        </Combo>
        <Slot $w={16} $ml={5}>
          <Ico s={16}>
            <path d="M2 12h28M2 20h28" stroke="#b3b6ba" strokeWidth="3" />
            <circle cx="9" cy="8" r="3" fill="none" stroke="#b3b6ba" strokeWidth="2" />
            <circle cx="23" cy="24" r="3" fill="none" stroke="#b3b6ba" strokeWidth="2" />
          </Ico>
        </Slot>
        <Slot $w={16} $ml={8}>
          <Ico s={16}>
            <rect x="9" y="4" width="14" height="16" fill="#c2c5c9" />
            <rect x="3" y="20" width="26" height="8" fill="#a9acb0" />
          </Ico>
        </Slot>
        <VSep $ml={8} />
        <Slot $w={13} $ml={5}>
          <Ico s={16}>
            <path d="M3 5h10v6H3zM3 14h10v6H3zM3 23h10v6H3z" fill="#9b9ea3" />
            <path d="M18 8l10 8-10 8z" fill="#d5d7da" />
          </Ico>
        </Slot>
        <Slot $w={17} $ml={10}>
          <Ico s={17}>
            <path d="M3 5h11v6H3z" fill="#2f8fb8" />
            <path d="M3 14h11v6H3z" fill="#3fb58c" />
            <path d="M3 23h11v6H3z" fill="#d8325a" />
            <path d="M18 8l10 8-10 8z" fill="#d5d7da" />
          </Ico>
        </Slot>
        <Slot $w={14} $ml={8}>
          <Ico s={16}>
            <path d="M3 5h11v6H3zM3 14h11v6H3zM3 23h11v6H3z" fill="#9b9ea3" />
            <path d="M18 8l10 8-10 8z" fill="#d5d7da" />
          </Ico>
        </Slot>
        <Slot $w={13} $ml={10}>
          <Ico s={15}>
            <polygon points="9,3 25,19 17,19 22,29 16,29 12,21 8,25" fill="#9b9ea3" />
          </Ico>
        </Slot>
        <VSep $ml={12} />
        <Slot $w={16} $ml={5}>
          <Ico s={17}>
            <polygon points="16,2 29,10 29,22 16,30 3,22 3,10" fill="none" stroke="#a9acb0" strokeWidth="5" strokeDasharray="7 2" />
          </Ico>
        </Slot>
        <Combo $w={102} $ml={5} $off>
          <span>Normal</span>
          <Caret $light />
        </Combo>
        <Slot $w={16} $ml={2}>
          <Ico s={16}>
            <polygon points="6,3 22,19 14,19 19,29 13,29 9,21 6,25" fill="#b9bcc0" />
          </Ico>
        </Slot>
        <Slot $w={16} $ml={9}>
          <Ico s={16}>
            <circle cx="20" cy="11" r="7" fill="none" stroke="#b9bcc0" strokeWidth="3" />
            <polygon points="3,14 17,22 10,24 12,30 8,30 6,24 3,26" fill="#b9bcc0" />
          </Ico>
        </Slot>
      </Toolbar>

      <Work>
        <Dock>
          <DockTitle>
            Block
            <Slot $w={34}>
              <Ico s={11}>
                <rect x="4" y="6" width="24" height="20" fill="none" stroke="#888" strokeWidth="2.6" />
                <rect x="11" y="13" width="10" height="6" fill="#aaa" />
              </Ico>
              <Slot $w={12} $ml={7}>
                <Ico s={12}>
                  <path d="M4 4l24 24M28 4L4 28" stroke="#8f9297" strokeWidth="5" />
                </Ico>
              </Slot>
            </Slot>
          </DockTitle>
          <DockBody>
            <Rail>
              <RailTab $on>
                <Ico s={26}>
                  <Box x={16} y={11} w={14} h={7} d={11} />
                </Ico>
              </RailTab>
              <RailTab>
                <Ico s={26}>
                  <Box x={9} y={8} w={7} h={4} d={7} c={{ t: "#bfe4ef", l: "#6fbcd6", r: "#4b9cba" }} />
                  <path d="M9 20v10M9 25h10M19 16h10" stroke="#555" strokeWidth="1.2" />
                  <rect x="19" y="21" width="9" height="8" fill="#fff" stroke="#555" strokeWidth="1.2" />
                </Ico>
              </RailTab>
              <RailTab>
                <Ico s={26}>
                  <rect x="10" y="2" width="13" height="9" fill="#3a95bb" />
                  <path d="M16 11v6M6 22v-5h21v5" stroke="#555" fill="none" />
                  <rect x="1" y="22" width="12" height="8" fill="#3a95bb" />
                  <rect x="19" y="22" width="12" height="8" fill="#cfe8f0" stroke="#3a95bb" />
                </Ico>
              </RailTab>
              <RailTab>
                <Ico s={26}>
                  <rect x="2" y="2" width="28" height="28" fill="#d8eef5" stroke="#5cb0cc" strokeWidth="2" />
                  <rect x="2" y="2" width="28" height="6" fill="#4aa5c6" />
                  <Box x={16} y={15} w={9} h={5} d={8} c={yel} />
                </Ico>
              </RailTab>
              <RailTab>
                <Ico s={26}>
                  <rect x="1" y="3" width="30" height="26" fill="#8fd0e4" />
                  <polygon points="1,29 12,14 20,22 24,18 31,29" fill="#2b8fb0" />
                  <circle cx="23" cy="9" r="4" fill="#f7b733" />
                  <path d="M2 20h10" stroke="#ee6a2b" strokeWidth="3.4" />
                  <polygon points="11,15 18,20 11,25" fill="#ee6a2b" />
                </Ico>
              </RailTab>
              <RailTab>
                <Ico s={26}>
                  <circle cx="21" cy="11" r="6" fill="#f5a623" />
                  <path d="M11 28c0-8 4-10 10-10s10 4 10 10z" fill="#f5a623" />
                  <circle cx="12" cy="12" r="7" fill="#2f8fb8" />
                  <path d="M1 30c0-9 4-12 11-12s11 4 11 12z" fill="#2f8fb8" />
                </Ico>
              </RailTab>
            </Rail>
            <Panel>
              <PanelTop>
                <PanelBtn>
                  <Ico s={18}>
                    <path d="M4 17l8 8L28 7" fill="none" stroke="#3dbb2f" strokeWidth="6" />
                  </Ico>
                </PanelBtn>
                <PanelBtn>
                  <Ico s={20}>
                    <path d="M5 5l22 22M27 5L5 27" stroke="#e2231f" strokeWidth="8" />
                  </Ico>
                </PanelBtn>
                <PanelBtn>
                  <Ico s={18}>
                    <rect x="4" y="7" width="22" height="21" fill="#fff" stroke="#e2231f" strokeWidth="3.5" />
                    <path d="M9 15l6 6L30 5" fill="none" stroke="#2fb52f" strokeWidth="4" />
                  </Ico>
                </PanelBtn>
                <PanelBtn $ml={170}>
                  <Ico s={18}>
                    <circle cx="16" cy="16" r="13" fill="#1f5fbf" stroke="#b9c4d0" strokeWidth="3" />
                    <text x="13" y="24" fontFamily="Liberation Serif" fontSize="21" fontWeight="700" fill="#fff">i</text>
                  </Ico>
                </PanelBtn>
                <PanelBtn $w={11}>
                  <Ico s={11}>
                    <path d="M4 2v28h24" fill="none" stroke="#2f9fd0" strokeWidth="4" />
                    <path d="M11 6l11 10-11 10" fill="none" stroke="#f0921e" strokeWidth="6" />
                  </Ico>
                </PanelBtn>
              </PanelTop>

              <Section>
                <SectionHead>
                  <HeadArrow />
                  Required
                </SectionHead>
                <SectionBody $pt={4} $pb={5} $gap={5}>
                  <ShapeRow>
                    <ShapeBtn>
                      <ShapeIcon tl br />
                    </ShapeBtn>
                    <ShapeBtn>
                      <ShapeIcon bl br />
                    </ShapeBtn>
                    <ShapeBtn $on>
                      <ShapeIcon tl side />
                    </ShapeBtn>
                    <ShapeBtn>
                      <ShapeIcon bl side />
                    </ShapeBtn>
                  </ShapeRow>
                  <Row>
                    <RowLabel>1st point</RowLabel>
                    <Field $w={134} $off>0,0,-5</Field>
                    <Slot $w={20} $ml={3}>
                      <DoubleChevron />
                    </Slot>
                    <Slot $w={24} $ml={2}>
                      <Ico s={17}>
                        <path d="M8 26V10M8 26l16-4M8 26l12-12" stroke="#62b8d4" strokeWidth="2" fill="none" />
                        <path d="M8 26l-5 3" stroke="#f0a72e" strokeWidth="2" />
                        <Dot x={24} y={6} r={2.6} />
                      </Ico>
                    </Slot>
                    <Caret />
                  </Row>
                  <Row>
                    <RowLabel>2nd point</RowLabel>
                    <Field $w={134}>-47,-23,24</Field>
                    <Slot $w={20} $ml={3}>
                      <DoubleChevron />
                    </Slot>
                    <Slot $w={24} $ml={2}>
                      <PickDown />
                    </Slot>
                    <Caret />
                  </Row>
                  <Row>
                    <RowLabel>Height</RowLabel>
                    <Field $w={156} $ml={1}>
                      3<Unit>mm</Unit>
                      <Spinner />
                    </Field>
                    <Slot $w={24} $ml={1}>
                      <PickDown />
                    </Slot>
                    <Caret />
                  </Row>
                </SectionBody>
              </Section>

              <Section>
                <SectionHead>
                  <HeadArrow />
                  Boolean
                </SectionHead>
                <SectionBody $pt={4} $pb={3} $gap={6}>
                  <ShapeRow>
                    <ShapeBtn>
                      <Ico s={32}>
                        <Box x={16} y={11} w={14} h={7} d={11} />
                      </Ico>
                    </ShapeBtn>
                    <ShapeBtn>
                      <Ico s={32}>
                        <Box x={16} y={17} w={14} h={6} d={8} />
                        <Box x={17} y={8} w={11} h={5} d={5} c={yel} />
                      </Ico>
                    </ShapeBtn>
                    <ShapeBtn $on>
                      <Ico s={32}>
                        <Box x={16} y={12} w={14} h={7} d={11} />
                        <polygon points="7,13 16,8 26,13 17,18" fill="#f0a72e" />
                        <polygon points="7,13 12,10 12,22 7,24" fill="#c67f1e" />
                      </Ico>
                    </ShapeBtn>
                    <ShapeBtn>
                      <Ico s={32}>
                        <Cyl x={16} y={6} r={8} h={20} c={{ t: "#c8e8f2", l: "#8fd0e4", r: "#6ab8d2" }} />
                        <polygon points="2,18 16,11 30,18 16,25" fill="#8fd0e4" opacity=".85" />
                        <ellipse cx="16" cy="18" rx="8" ry="4" fill="#f0c53a" />
                      </Ico>
                    </ShapeBtn>
                  </ShapeRow>
                  <Row $h={20}>
                    <RowLabel>Boolean shapes</RowLabel>
                    <Field $w={168} $ml={1} />
                    <Slot $w={20} $ml={3}>
                      <DoubleChevron />
                    </Slot>
                  </Row>
                </SectionBody>
              </Section>

              <Section>
                <SectionHead>
                  <HeadArrow />
                  Dimensions
                </SectionHead>
                <SectionBody $pt={6} $pb={5} $gap={7}>
                  <Row>
                    <RowLabel>Length</RowLabel>
                    <Field $w={168} $ml={1}>
                      72<Unit>mm</Unit>
                      <Spinner />
                    </Field>
                    <Slot $w={20} $ml={3}>
                      <Lock />
                    </Slot>
                  </Row>
                  <Row>
                    <RowLabel>Width</RowLabel>
                    <Field $w={168} $ml={1}>
                      46<Unit>mm</Unit>
                      <Spinner />
                    </Field>
                    <Slot $w={20} $ml={3}>
                      <Lock />
                    </Slot>
                  </Row>
                </SectionBody>
              </Section>

              <Section>
                <SectionHead>
                  <HeadArrow />
                  Settings
                </SectionHead>
                <SectionBody $pt={6} $pb={4} $gap={0}>
                  <Row $h={20}>
                    <RowLabel>Align plane</RowLabel>
                    <Field $w={170} />
                    <Slot $w={20} $ml={3}>
                      <PickDown olive />
                    </Slot>
                  </Row>
                </SectionBody>
              </Section>

              <Section>
                <SectionHead>
                  <HeadArrow />
                  Tolerance
                </SectionHead>
                <SectionBody $pt={4} $pb={3} $gap={0}>
                  <Row>
                    <RowLabel>Tolerance</RowLabel>
                    <Field $w={196} $ml={-1}>
                      0.0127<Unit>mm</Unit>
                      <Spinner />
                    </Field>
                  </Row>
                </SectionBody>
              </Section>
            </Panel>
          </DockBody>
        </Dock>

        <Main>
          <DocRow>
            <DocTab>
              <Ico s={13}>
                <path d="M16 3v26M3 16h26" stroke="#6b5a2a" strokeWidth="4" />
              </Ico>
              File001.Z3 - [Base]
              <Ico s={11}>
                <path d="M4 4l24 24M28 4L4 28" stroke="#7d6a3a" strokeWidth="5" />
              </Ico>
            </DocTab>
            <Slot $w={14} $ml={7}>
              <Ico s={12}>
                <path d="M16 3v26M3 16h26" stroke="#9a9ea3" strokeWidth="4" />
              </Ico>
            </Slot>
            <Slot $w={14} $ml={1353}>
              <Ico s={11}>
                <path d="M4 4h24M8 12l8 7 8-7zM4 27h24" stroke="#888" strokeWidth="3" fill="#888" />
              </Ico>
            </Slot>
          </DocRow>
          <Viewport>
            <Canvas viewBox="360 193 1559 817" preserveAspectRatio="none">
              <Model />
            </Canvas>
            <Hint>&lt;LEFT-CLICK&gt; TO ACTIVATE DYNAMIC PICK INPUT.</Hint>
            <Readout>91.7327 mm</Readout>
            <ViewBar>
              <Slot $w={16}>
                <Ico s={17}>
                  <path d="M14 4h15v24H14v-5h10V9H14z" fill="#1b7fae" />
                  <polygon points="1,16 11,7 11,12 20,12 20,20 11,20 11,25" fill="#e2231f" />
                </Ico>
              </Slot>
              <Slot $w={18} $ml={9}>
                <Ico s={19}>
                  <rect x="8" y="2" width="9" height="12" fill="#78b8cf" />
                  <polygon points="2,22 16,14 30,22 16,30" fill="#c6e39a" stroke="#6fbf3a" />
                  <path d="M10 14v8" stroke="#e2231f" strokeWidth="2" />
                  <rect x="13" y="16" width="6" height="5" fill="#f0a72e" />
                </Ico>
              </Slot>
              <Slot $w={8} $ml={4}>
                <Caret />
              </Slot>
              <Slot $w={16} $ml={9}>
                <Ico s={18}>
                  <polygon points="4,22 22,3 29,10 11,29" fill="#f1e4d8" stroke="#a06a5a" />
                  <polygon points="4,22 11,14 18,21 11,29" fill="#d8433a" />
                </Ico>
              </Slot>
              <Slot $w={18} $ml={8}>
                <Ico s={18}>
                  <Box x={16} y={17} w={14} h={7} d={6} />
                  <polygon points="2,17 16,10 30,17 16,24" fill="#ffd94a" />
                  <path d="M16 3v12" stroke="#2f8fb8" strokeWidth="2" />
                </Ico>
              </Slot>
              <Slot $w={18} $ml={9}>
                <Ico s={19}>
                  <Box x={16} y={10} w={14} h={8} d={13} />
                </Ico>
              </Slot>
              <Slot $w={8} $ml={4}>
                <Caret />
              </Slot>
              <Slot $w={18} $ml={8}>
                <Ico s={19}>
                  <Box x={17} y={10} w={14} h={7} d={13} c={{ t: "#4aa5c6", l: "#1b7fae", r: "#0b5d84" }} />
                  <rect x="3" y="4" width="13" height="12" fill="#9fd3e6" stroke="#1b6f95" />
                </Ico>
              </Slot>
              <Slot $w={8} $ml={4}>
                <Caret />
              </Slot>
              <Slot $w={15} $ml={10}>
                <Ico s={17}>
                  <polygon points="16,2 30,10 30,23 16,30 2,23 2,10" fill="#f5b02c" stroke="#d8562a" strokeWidth="1.6" />
                  <path d="M2 10l14 8 14-8M16 18v12M16 2v16M2 23l14-5 14 5" stroke="#d8562a" fill="none" />
                </Ico>
              </Slot>
              <Slot $w={8} $ml={5}>
                <Caret />
              </Slot>
              <Slot $w={17} $ml={8}>
                <Ico s={18}>
                  <rect x="1" y="1" width="30" height="30" fill="#a9d4e6" stroke="#2a8fb5" strokeWidth="2" />
                  <circle cx="15" cy="16" r="9" fill="#fff6d8" stroke="#e3b13a" strokeWidth="3" />
                </Ico>
              </Slot>
              <Slot $w={8} $ml={5}>
                <Caret />
              </Slot>
              <Slot $w={15} $ml={9}>
                <Ico s={16}>
                  <rect x="2" y="2" width="28" height="28" fill="#f5fafc" stroke="#9dc6d8" strokeWidth="2" strokeDasharray="6 2" />
                  <rect x="5" y="19" width="9" height="8" fill="#1b7fae" />
                </Ico>
              </Slot>
              <Slot $w={16} $ml={12}>
                <Ico s={18}>
                  <path d="M4 4v22M28 4v22" stroke="#2a8fb5" strokeWidth="3" />
                  <path d="M4 12h24" stroke="#2a8fb5" strokeWidth="2" />
                  <path d="M2 29h28" stroke="#d8232a" strokeWidth="3" />
                </Ico>
              </Slot>
              <Slot $w={8} $ml={2}>
                <Caret />
              </Slot>
              <Slot $w={16} $ml={11}>
                <Ico s={17}>
                  <rect x="2" y="4" width="28" height="20" fill="#6fa8c0" stroke="#3a6f88" />
                  <path d="M2 14h28M10 4v20M20 4v20" stroke="#2f5f78" />
                  <rect x="10" y="24" width="12" height="5" fill="#555" />
                </Ico>
              </Slot>
              <Slot $w={8} $ml={4}>
                <Caret />
              </Slot>
              <Slot $w={19} $ml={9}>
                <Ico s={19}>
                  <rect x="1" y="11" width="30" height="10" fill="#000" />
                </Ico>
              </Slot>
              <Slot $w={16} $ml={8}>
                <Ico s={17}>
                  <rect x="2" y="2" width="28" height="28" fill="#bfe0ee" stroke="#5a9ab5" strokeWidth="2" />
                </Ico>
              </Slot>
              <Slot $w={18} $ml={8}>
                <Ico s={19}>
                  <Box x={16} y={12} w={14} h={6} d={8} c={{ t: "#6fd6b8", l: "#2fa58c", r: "#1a7f6d" }} />
                </Ico>
              </Slot>
              <Slot $w={8} $ml={4}>
                <Caret />
              </Slot>
              <LayerBox>
                <Ico s={14}>
                  <path d="M16 3a9 9 0 0 0-5 16v5h10v-5a9 9 0 0 0-5-16zM12 28h8" fill="#f4f4f4" stroke="#a0a0a0" strokeWidth="2" />
                </Ico>
                <Ico s={15}>
                  <circle cx="16" cy="16" r="12" fill="#d2d2d2" stroke="#a0a0a0" strokeWidth="2" />
                </Ico>
                <span>Layer0000</span>
                <Caret $light $ml={14} />
              </LayerBox>
            </ViewBar>
          </Viewport>
        </Main>
      </Work>

      <Status>
        <StatusText>Specify length.   &lt;middle-click&gt; for default. (72)</StatusText>
        <VSep />
        <StatusHi $w={22} $ml={7}>
          <Ico s={16}>
            <rect x="2" y="2" width="28" height="28" fill="#fff" stroke="#3a6fc0" strokeWidth="2" />
            <rect x="2" y="2" width="28" height="6" fill="#3a6fc0" />
            <path d="M12 12h14v4h-5v12h-4V16h-5z" fill="#d8232a" />
          </Ico>
        </StatusHi>
        <Slot $w={18} $ml={8}>
          <Ico s={18}>
            <rect x="2" y="5" width="28" height="17" fill="#4cc0d8" stroke="#3a8fa8" />
            <rect x="8" y="22" width="16" height="5" fill="#555" />
          </Ico>
        </Slot>
        <Slot $w={16} $ml={12}>
          <Ico s={16}>
            <rect x="3" y="2" width="26" height="28" fill="#e4ecf8" stroke="#3a6fc0" strokeWidth="2" />
            <rect x="3" y="2" width="26" height="5" fill="#3a6fc0" />
            <path d="M7 12h18M7 17h18M7 22h18" stroke="#3a6fc0" strokeWidth="1.8" />
          </Ico>
        </Slot>
        <StatusInput />
      </Status>
    </Root>
  );
}
